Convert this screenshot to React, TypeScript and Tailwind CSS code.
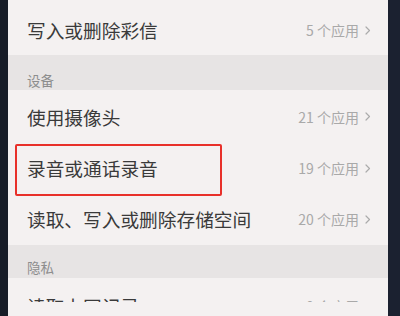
import React from "react";

const Chevron = () => (
  <svg width="6" height="9" viewBox="0 0 6 9" className="ml-[6px]" fill="none">
    <path d="M1 1l3.5 3.5L1 8" stroke="#ababab" strokeWidth="1.2" strokeLinecap="round" strokeLinejoin="round" />
  </svg>
);

const Row = ({
  label,
  count,
  h,
  extra,
}: {
  label: string;
  count: string;
  h: string;
  extra?: React.ReactNode;
}) => (
  <div className={`relative flex items-center justify-between pl-[19px] pr-[17px] ${h}`}>
    <span className="text-[18.7px] leading-[24px] text-[#3a3a3a]">{label}</span>
    <span className="flex items-center text-[14px] leading-[18px] text-[#a9a9a9]">
      {count}
      <Chevron />
    </span>
    {extra}
  </div>
);

export default function App() {
  return (
    <div
      className="flex h-[316px] w-[400px] overflow-hidden bg-[#1a1f2b]"
      style={{ fontFamily: '"Noto Sans CJK SC", "Noto Sans", sans-serif' }}
    >
      <div className="w-[8px] bg-[#171c27]" />
      <div className="flex flex-1 flex-col bg-[#f4f1f1]">
        <div className="h-[5px]" />
        <Row label="写入或删除彩信" count="5 个应用" h="h-[50px]" />
        <div className="h-[35px] bg-[#e7e4e4] pl-[19px] pt-[17px]">
          <div className="text-[13.5px] leading-[16px] text-[#8d8d8d]">设备</div>
        </div>
        <Row label="使用摄像头" count="21 个应用" h="h-[53px]" />
        <Row
          label="录音或通话录音"
          count="19 个应用"
          h="h-[50px]"
          extra={
            <div className="absolute left-[7px] top-[1px] h-[52px] w-[207px] rounded-[2px] border-[2.5px] border-[#e8302a]" />
          }
        />
        <Row label="读取、写入或删除存储空间" count="20 个应用" h="h-[52px]" />
        <div className="h-[33px] bg-[#e7e4e4] pl-[19px] pt-[14px]">
          <div className="text-[13.5px] leading-[16px] text-[#8d8d8d]">隐私</div>
        </div>
        <div className="h-[24px] overflow-hidden">
          <div className="flex items-start justify-between pl-[19px] pr-[17px] pt-[16px]">
            <span className="text-[18.7px] leading-[24px] text-[#3a3a3a]">读取上网记录</span>
            <span className="mt-[3px] flex items-center text-[14px] leading-[18px] text-[#a9a9a9]">
              0 个应用
              <Chevron />
            </span>
          </div>
        </div>
        <div className="flex-1" />
      </div>
      <div className="w-[12px] bg-[#1b2130]" />
    </div>
  );
}
